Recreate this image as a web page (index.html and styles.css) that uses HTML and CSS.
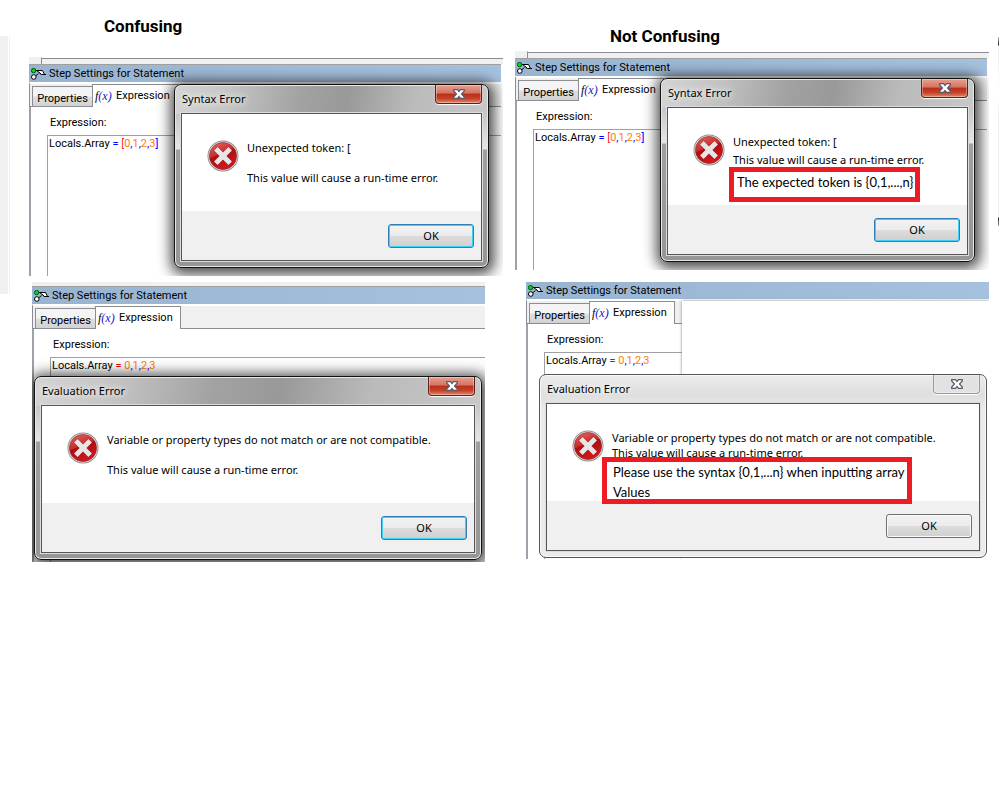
FILE: index.html
```html
<!DOCTYPE html>
<html lang="en">
<head>
<meta charset="utf-8">
<title>Error messages: confusing and not confusing</title>
<link rel="stylesheet" href="styles.css">
</head>
<body>
<svg class="defs" aria-hidden="true">
  <defs>
    <linearGradient id="red" x1="0" y1="0" x2="0.4" y2="1">
      <stop offset="0" stop-color="#e06a62"/><stop offset="0.5" stop-color="#cb2a2a"/><stop offset="0.52" stop-color="#ae0d10"/><stop offset="1" stop-color="#d0181c"/>
    </linearGradient>
    <symbol id="error" viewBox="0 0 32 32">
      <circle cx="16" cy="16" r="15.5" fill="#8c8c8c"/>
      <circle cx="16" cy="16" r="14.6" fill="#e9e9e9"/>
      <circle cx="16" cy="16" r="13.6" fill="url(#red)" stroke="#8e2020" stroke-width="0.6"/>
      <path d="M10.6 10.6 21.4 21.4M21.4 10.6 10.6 21.4" stroke="#8e1515" stroke-width="6" stroke-linecap="square" opacity="0.4"/>
      <path d="M10.6 10.6 21.4 21.4M21.4 10.6 10.6 21.4" stroke="#e6e6e6" stroke-width="5" stroke-linecap="square"/>
    </symbol>
    <symbol id="step" viewBox="0 0 15 12">
      <path d="M4.500 2.500H7L10.500 7" stroke="#000" fill="none"/>
      <path d="M5.500 2.500H11.500L13.500 6.500H10.500L9 5Z" fill="#fff" stroke="#000"/>
      <path d="M12 6.500H15" stroke="#000"/>
      <path d="M4.500 8 7.500 5.500" stroke="#000"/>
      <circle cx="2.600" cy="2.600" r="2.200" fill="#0d0" stroke="#052"/>
      <circle cx="2.800" cy="9" r="2.300" fill="#fff" stroke="#000"/>
    </symbol>
    <symbol id="cross" viewBox="0 0 12 10">
      <path d="M0.700 0.700H4.500L6 2.500 7.500 0.700H11.300V2L8.500 5 11.300 8V9.300H7.500L6 7.500 4.500 9.300H0.700V8L3.500 5 0.700 2Z" fill="#fff" stroke="#565a6b" stroke-width="1.200"/>
    </symbol>
  </defs>
</svg>
<div class="edge"></div>
<div class="rule"></div>
<main class="board">
  <section class="column">
    <h1 class="heading heading-left">Confusing</h1>

    <article class="panel panel-top">
      <div class="splitter"></div>
      <header class="caption"><svg class="step"><use href="#step"/></svg>Step Settings for Statement</header>
      <nav class="tabs">
        <button class="tab">Properties</button>
        <button class="tab active"><span class="fx">f<span>(x)</span></span>Expression</button>
      </nav>
      <div class="sheet">
        <div class="label">Expression:</div>
        <div class="editor"><span>Locals.Array</span> = <i class="red">[</i><i>0</i>,<i>1</i>,<i>2</i>,<i>3</i>]</div>
      </div>
      <div class="dialog dialog-syntax" role="dialog" aria-label="Syntax Error">
        <div class="titlebar"><span>Syntax Error</span><button class="close" aria-label="Close"><svg><use href="#cross"/></svg></button></div>
        <div class="client">
          <div class="message"><svg class="error"><use href="#error"/></svg>
            <div class="text"><p>Unexpected token: [</p><p class="apart">This value will cause a run-time error.</p></div></div>
          <div class="actions"><button class="ok">OK</button></div>
        </div>
      </div>
    </article>

    <article class="panel panel-left-low">
      <div class="splitter thin"></div>
      <header class="caption"><svg class="step"><use href="#step"/></svg>Step Settings for Statement</header>
      <nav class="tabs">
        <button class="tab">Properties</button>
        <button class="tab active"><span class="fx">f<span>(x)</span></span>Expression</button>
      </nav>
      <div class="sheet">
        <div class="label">Expression:</div>
        <div class="editor"><span>Locals.Array</span> <i class="crimson">=</i> <i>0</i>,<i>1</i>,<i>2</i>,<i>3</i></div>
      </div>
      <div class="dialog dialog-eval" role="dialog" aria-label="Evaluation Error">
        <div class="titlebar"><span>Evaluation Error</span><button class="close" aria-label="Close"><svg><use href="#cross"/></svg></button></div>
        <div class="client">
          <div class="message"><svg class="error"><use href="#error"/></svg>
            <div class="text"><p>Variable or property types do not match or are not compatible.</p><p class="apart">This value will cause a run-time error.</p></div></div>
          <div class="actions"><button class="ok">OK</button></div>
        </div>
      </div>
    </article>
  </section>

  <section class="column">
    <h1 class="heading heading-right">Not Confusing</h1>

    <article class="panel panel-top">
      <div class="splitter"></div>
      <header class="caption"><svg class="step"><use href="#step"/></svg>Step Settings for Statement</header>
      <nav class="tabs">
        <button class="tab">Properties</button>
        <button class="tab active"><span class="fx">f<span>(x)</span></span>Expression</button>
      </nav>
      <div class="sheet">
        <div class="label">Expression:</div>
        <div class="editor"><span>Locals.Array</span> = <i class="red">[</i><i>0</i>,<i>1</i>,<i>2</i>,<i>3</i>]</div>
      </div>
      <div class="dialog dialog-syntax" role="dialog" aria-label="Syntax Error">
        <div class="titlebar"><span>Syntax Error</span><button class="close" aria-label="Close"><svg><use href="#cross"/></svg></button></div>
        <div class="client">
          <div class="message"><svg class="error"><use href="#error"/></svg>
            <div class="text"><p>Unexpected token: [</p><p class="near">This value will cause a run-time error.</p></div></div>
          <div class="actions"><button class="ok">OK</button></div>
          <p class="note note-token">The expected token is {0,1,...,n}</p>
        </div>
      </div>
    </article>

    <article class="panel panel-right-low">
      <header class="caption"><svg class="step"><use href="#step"/></svg>Step Settings for Statement</header>
      <nav class="tabs">
        <button class="tab">Properties</button>
        <button class="tab active"><span class="fx">f<span>(x)</span></span>Expression</button>
      </nav>
      <div class="sheet">
        <div class="label">Expression:</div>
        <div class="editor"><span>Locals.Array</span> <i class="crimson">=</i> <i>0</i>,<i>1</i>,<i>2</i>,<i>3</i></div>
      </div>
      <div class="cover"></div>
      <div class="dialog dialog-eval inactive" role="dialog" aria-label="Evaluation Error">
        <div class="titlebar"><span>Evaluation Error</span><button class="close" aria-label="Close"><svg><use href="#cross"/></svg></button></div>
        <div class="client">
          <div class="message"><svg class="error"><use href="#error"/></svg>
            <div class="text"><p>Variable or property types do not match or are not compatible.</p><p>This value will cause a run-time error.</p></div></div>
          <div class="actions"><button class="ok">OK</button></div>
          <p class="note note-syntax">Please use the syntax {0,1,...n} when inputting array<br>Values</p>
        </div>
      </div>
    </article>
  </section>
</main>
</body>
</html>
```
FILE: styles.css
```css
* { box-sizing: border-box; }
body {
  margin: 0;
  background: #fff;
  color: #000;
  font: 11px/14px Roboto, "Liberation Sans", Arial, sans-serif;
}
p, h1 { margin: 0; }
button { font: inherit; color: inherit; padding: 0; margin: 0; }
.defs { position: absolute; width: 0; height: 0; }

/* slivers of the windows on either side of the board */
.edge {
  position: absolute;
  left: 0;
  top: 36px;
  width: 10px;
  height: 258px;
  background: #f0f0f0;
  border-right: 1px solid #f0f0f0;
  box-shadow: inset -1px 0 #fff;
}
.rule {
  position: absolute;
  right: 8px;
  top: 37px;
  width: 1px;
  height: 189px;
  background: linear-gradient(#bbb, #222 8px, #eee 9px, #fff 60px, #eee 80px, #eee 180px, #222 181px, #999);
}

.board {
  display: grid;
  grid-template-columns: 1fr 1fr;
  gap: 12px;
  padding: 0 18px 0 29px;
}
.heading { font: bold 17px/20px Roboto, "Liberation Sans", sans-serif; }
.heading-left { padding: 16px 0 21px 75px; }
.heading-right { padding: 26px 0 5px 95px; }

.panel { position: relative; overflow: hidden; }
.panel-top { height: 219px; }
.panel-left-low { height: 280px; margin: 6px 18px 0 3px; }
.panel-right-low { height: 277px; margin: 12px 0 0 11px; }

.splitter {
  height: 7px;
  margin-left: 12px;
  background: #f0f0f0;
  border-top: 1px solid #fff;
  border-left: 1px solid #8c8c94;
  box-shadow: -12px 0 #f0f0f0, inset 0 1px #8c8c94;
}
.splitter.thin { height: 4px; margin: 0; border: 0; box-shadow: none; }

.caption {
  display: flex;
  align-items: center;
  gap: 3px;
  height: 18px;
  margin-right: 2px;
  padding-left: 2px;
  background: linear-gradient(90deg, #99b4d1, #a6c1de);
  border-top: 1px solid #a0a0a0;
}
.panel-left-low .caption { margin-right: 0; }
.panel-right-low .caption { margin-right: 0; height: 17px; border-top: 0; }
.step { width: 15px; height: 12px; }

.tabs {
  display: flex;
  align-items: flex-end;
  height: 25px;
  margin-right: 2px;
  padding-left: 2px;
  background: #f0f0f0;
  border-top: 2px solid #fff;
  border-left: 1px solid #8c8c94;
  box-shadow: inset 0 -1px #8c8c94;
}
.tab {
  height: 21px;
  width: 60px;
  padding: 4px 0 0;
  border: 1px solid #8c8c94;
  border-right: 0;
  background: linear-gradient(#f4f4f4 45%, #dedede 55%, #d2d2d2);
}
.tab.active {
  display: flex;
  align-items: center;
  height: 23px;
  width: 86px;
  padding: 0 0 0 2px;
  background: #fff;
  border-right: 1px solid #8c8c94;
  border-bottom: 0;
}
.fx { width: 21px; text-align: left; font: italic 12px/14px "Liberation Serif", serif; }
.fx span { color: #1414c8; }

.sheet {
  height: 260px;
  margin-right: 2px;
  padding: 8px 0 0 16px;
  border-left: 2px solid #a0a0a8;
}
.panel-left-low .tabs, .panel-left-low .sheet { margin-right: 0; }
.label { padding: 1px 0 0 3px; height: 20px; }
.editor {
  height: 260px;
  padding: 1px;
  border: 1px solid #a0a0a4;
  border-right: 0;
  color: #00f;
}
.editor span { color: #000; }
.editor i { font-style: normal; color: #ff8000; }
.editor .red { color: #f22; }
.editor .crimson { color: #e00; }

.cover {
  position: absolute;
  left: 156px;
  right: 0;
  top: 19px;
  bottom: 0;
  background: #fff;
  box-shadow: 0 0 3px #888;
}
.panel-right-low .tabs, .panel-right-low .sheet { margin-right: 0; }

.dialog {
  position: absolute;
  display: flex;
  flex-direction: column;
  height: 184px;
  padding: 0 6px 6px;
  border: 1px solid #111;
  border-radius: 7px;
  background:
    linear-gradient(100deg, #d4d4d4 0, #c4c4c4 18%, #a2a2a2 40%, #999 55%, #bababa 75%, #c8c8c8) 0 0 / 100% 29px no-repeat,
    linear-gradient(#c6c6c6 29px, #e6e6e6 64px, #a0a0a0 65px, #969696);
  box-shadow: inset 0 0 0 1px #e8e8e8, 1px 2px 14px 4px #000b;
  font: 11px/15px "Noto Sans", "Open Sans", sans-serif;
}
.dialog-syntax { left: 145px; right: 14px; top: 27px; }
.dialog-eval { left: 2px; right: 3px; top: 94px; }
.dialog-eval.inactive { left: 13px; right: 2px; top: 92px; }
.titlebar {
  display: flex;
  justify-content: space-between;
  height: 28px;
  padding-left: 1px;
}
.titlebar span { padding-top: 6px; text-shadow: 0 0 6px #fff, 0 0 8px #fff; }
.close {
  display: grid;
  place-items: center;
  width: 47px;
  height: 19px;
  border: 1px solid #5c2020;
  border-top: 0;
  border-radius: 0 0 4px 4px;
  background: linear-gradient(#e8a090, #d37462 45%, #b8301a 50%, #c84028 75%, #e08868);
  box-shadow: inset 0 0 0 1px #fff5, 0 1px 1px #fff;
}
.close svg { width: 12px; height: 10px; }
.client {
  position: relative;
  flex: 1;
  display: flex;
  flex-direction: column;
  border: 1px solid #555;
  background: #fff;
  box-shadow: 0 0 0 1px #ddd;
}
.message { flex: 1; display: flex; gap: 8px; padding: 26px 0 0 25px; }
.error { flex: none; width: 32px; height: 32px; }
.text { white-space: nowrap; }
.apart { margin-top: 15px; }
.near { margin-top: 3px; }
.actions {
  display: flex;
  justify-content: flex-end;
  height: 49px;
  padding: 13px 7px 12px;
  background: #f0f0f0;
}
.ok {
  width: 86px;
  height: 24px;
  padding-bottom: 2px;
  border: 1px solid #2f7fb4;
  border-radius: 3px;
  background: linear-gradient(#f3f3f3, #ebebeb 50%, #dcdcdc 52%, #cfcfcf);
  box-shadow: inset 0 0 0 1px #3fd0f8;
}
.inactive {
  border-color: #555;
  background: linear-gradient(#ececec, #dedede 20px, #ebebeb 35px, #ebebeb);
  box-shadow: inset 0 0 0 1px #fafafa;
}
.inactive .close { background: #e2e2e2; border-color: #999; }
.inactive .ok { border-color: #707070; box-shadow: inset 0 0 0 1px #fafafa; }

.note {
  position: absolute;
  border: 5px solid #ed1c24;
  background: #fff;
  font: 13px/20px Lato, "Liberation Sans", sans-serif;
  white-space: nowrap;
}
.note-token { left: 61px; top: 59px; width: 191px; height: 35px; padding: 0 3px; }
.note-syntax { left: 55px; top: 53px; width: 310px; height: 47px; padding: 0 6px; }
```
